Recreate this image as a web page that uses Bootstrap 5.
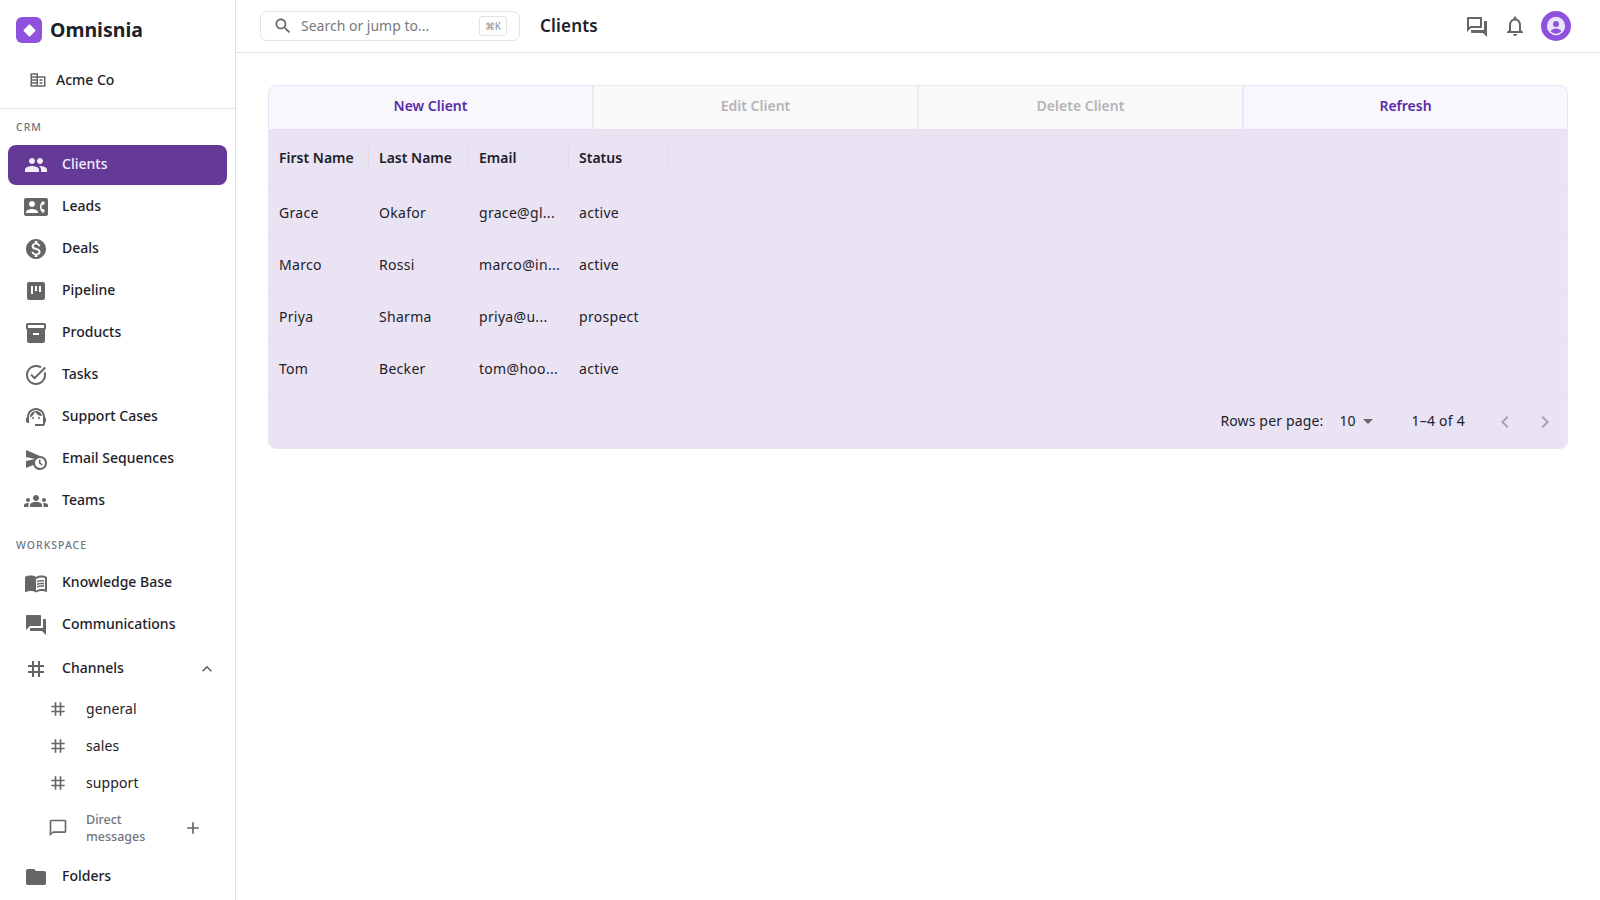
<!DOCTYPE html>
<html lang="en">
<head>
  <meta charset="UTF-8">
  <meta name="viewport" content="width=device-width, initial-scale=1.0">
  <title>Omnisnia - Clients</title>

  <!-- Bootstrap CSS -->
  <link href="https://cdn.jsdelivr.net/npm/bootstrap@5.3.3/dist/css/bootstrap.min.css" rel="stylesheet">

  <style>
    body { font-family: "Noto Sans", "Liberation Sans", sans-serif; font-size: 14px; color: #1d2129; background: #fff; height: 900px; overflow: hidden; }
    .ico { width: 24px; height: 24px; fill: #666; flex: none; }
    .ico-sm { width: 20px; height: 20px; }

    /* sidebar */
    .side { width: 236px; height: 900px; border-right: 1px solid #e2e2e6; flex: none; overflow: hidden; }
    .brand-row { height: 60px; padding-left: 16px; gap: 8px; }
    .brand-logo { width: 26px; height: 26px; border-radius: 6px; background: #8e52dc; }
    .brand-logo i { display: block; width: 9px; height: 9px; background: #fff; transform: rotate(45deg); border-radius: 1px; }
    .brand-name { font-size: 19.5px; font-weight: 700; line-height: 1; }
    .org-row { height: 49px; padding: 0 0 10px 29px; gap: 9px; font-weight: 500; border-bottom: 1px solid #e2e2e6; }
    .org-row .ico { width: 18px; height: 18px; margin-top: 1px; }
    .side-label { font-size: 10.5px; letter-spacing: 1px; color: #6f7480; font-weight: 500; line-height: 14px; padding: 11px 0 11px 16px; }
    .side-label.second { padding: 15px 0 11px 16px; }
    .side .nav-link { height: 40px; margin: 0 8px 2px; padding: 0 0 3px 16px; gap: 14px; display: flex; align-items: center; border-radius: 8px; color: #1d2129; font-weight: 500; }
    .side .nav-link .ico { margin-top: 3px; }
    .side .nav-link.active { background: #643a96; color: #f3ecfb; }
    .side .nav-link.active .ico { fill: #f3ecfb; }
    .side .channels-link { margin-top: 2px; }
    .side .sub-link { height: 37px; margin: 0 8px; padding-left: 40px; gap: 18px; font-weight: 400; letter-spacing: .1px; }
    .side .sub-link .ico { width: 20px; height: 20px; margin-top: 2px; }
    .dm-link { height: 52px; margin: 0 8px 3px; padding-left: 40px; gap: 18px; font-size: 12.5px; color: #6f7480; line-height: 17px; font-weight: 500; }
    .channels-chevron { margin-right: 10px; }
    .dm-add { margin-right: 24px; }

    /* header */
    .topbar { height: 53px; border-bottom: 1px solid #e2e2e6; padding: 0 29px 0 24px; }
    .search-box { width: 260px; height: 30px; border: 1px solid #e2e2e6; border-radius: 7px; padding: 0 12px; gap: 8px; color: #77797f; }
    .search-text { padding-bottom: 2px; }
    .kbd-hint { font-size: 10px; color: #8b8d93; border: 1px solid #e2e2e6; border-radius: 3px; padding: 0 5px; height: 20px; line-height: 18px; }
    .page-title { font-size: 17px; font-weight: 600; margin-left: 20px; letter-spacing: .2px; }
    .top-actions { gap: 14px; }
    .top-actions .ico:first-child { margin-top: 2px; }
    .avatar-dot { width: 30px; height: 30px; border-radius: 50%; background: #8e52dc; }

    /* client grid */
    .grid-wrap { margin: 32px 32px 0; border-radius: 8px; overflow: hidden; background: #eae3f3; border: 1px solid #e9e6f3; }
    .tool-row { height: 45px; border-bottom: 2px solid #e6e2f1; }
    .tool-row .btn { flex: 1; border: 0; border-radius: 0; border-right: 2px solid #ebe9f3; background: #f8f7fe; color: #5a2ca8; font-size: 14px; font-weight: 600; padding-bottom: 10px; }
    .tool-row .btn:last-child { border-right: 0; }
    .tool-row .btn:disabled { background: #f9f9f9; color: #b4b4b8; opacity: 1; }
    .client-table { table-layout: fixed; margin: 0; --bs-table-bg: transparent; --bs-table-color: #1d2129; --bs-table-border-color: #e4deee; }
    .client-table th, .client-table td { width: 100px; padding: 0 10px 2px; vertical-align: middle; white-space: nowrap; font-size: 14px; }
    .client-table .fill-col { width: auto; }
    .client-table thead tr { height: 56px; }
    .client-table tbody tr { height: 52px; }
    .client-table th { font-weight: 600; position: relative; }
    .client-table th:not(.fill-col)::after { content: ""; position: absolute; right: 0; top: 16px; height: 24px; width: 1px; background: #e0d9ea; }
    .client-table td { font-weight: 400; letter-spacing: .3px; }
    .pager { height: 52px; padding: 0 10px 3px 0; color: #1d2129; }
    .pager .ico { fill: #a5a3ab; margin-top: 3px; }
    .rows-label { letter-spacing: .15px; }
    .page-range { letter-spacing: .25px; margin-right: 28px; }
    .caret-down { width: 0; height: 0; border-left: 5px solid transparent; border-right: 5px solid transparent; border-top: 5px solid #666; margin: 3px 38px 0 8px; }
  </style>
</head>
<body>

<svg class="d-none">
  <symbol id="i-people" viewBox="0 0 24 24"><path d="M16 11c1.66 0 2.99-1.34 2.99-3S17.66 5 16 5c-1.66 0-3 1.34-3 3s1.34 3 3 3zm-8 0c1.66 0 2.99-1.34 2.99-3S9.66 5 8 5C6.34 5 5 6.34 5 8s1.34 3 3 3zm0 2c-2.33 0-7 1.17-7 3.5V19h14v-2.5c0-2.33-4.67-3.5-7-3.5zm8 0c-.29 0-.62.02-.97.05 1.16.84 1.97 1.97 1.97 3.45V19h6v-2.5c0-2.33-4.67-3.5-7-3.5z"/></symbol>
  <symbol id="i-leads" viewBox="0 0 24 24"><path d="M22 3H2C.9 3 0 3.9 0 5v14c0 1.1.9 2 2 2h20c1.1 0 1.99-.9 1.99-2L24 5c0-1.1-.9-2-2-2zM8 6c1.66 0 3 1.34 3 3s-1.34 3-3 3-3-1.34-3-3 1.34-3 3-3zm6 12H2v-1c0-2 4-3.1 6-3.1s6 1.1 6 3.1v1zm3.85-4h1.64L21 16l-1.99 1.99c-1.31-.98-2.28-2.38-2.73-3.99-.18-.64-.28-1.31-.28-2s.1-1.36.28-2c.45-1.62 1.42-3.01 2.73-3.99L21 8l-1.51 2h-1.64c-.22.63-.35 1.3-.35 2s.13 1.37.35 2z"/></symbol>
  <symbol id="i-deals" viewBox="0 0 24 24"><path d="M12 2C6.48 2 2 6.48 2 12s4.48 10 10 10 10-4.48 10-10S17.52 2 12 2zm1.41 16.09V20h-2.67v-1.93c-1.71-.36-3.16-1.46-3.27-3.4h1.96c.1 1.05.82 1.87 2.65 1.87 1.96 0 2.4-.98 2.4-1.59 0-.83-.44-1.61-2.67-2.14-2.48-.6-4.18-1.62-4.18-3.67 0-1.72 1.39-2.84 3.11-3.21V4h2.67v1.95c1.86.45 2.79 1.86 2.85 3.39H14.3c-.05-1.11-.64-1.87-2.22-1.87-1.5 0-2.4.68-2.4 1.64 0 .84.65 1.39 2.67 1.91s4.18 1.39 4.18 3.91c-.01 1.83-1.38 2.83-3.12 3.16z"/></symbol>
  <symbol id="i-pipeline" viewBox="0 0 24 24"><path d="M19 3H5c-1.1 0-2 .9-2 2v14c0 1.1.9 2 2 2h14c1.1 0 2-.9 2-2V5c0-1.1-.9-2-2-2zM9 15H7V7h2v8zm4-3h-2V7h2v5zm4 1h-2V7h2v6z"/></symbol>
  <symbol id="i-products" viewBox="0 0 24 24"><path d="M20 2H4c-1 0-2 .9-2 2v3.01c0 .72.43 1.34 1 1.69V20c0 1.1 1.1 2 2 2h14c.9 0 2-.9 2-2V8.7c.57-.35 1-.97 1-1.69V4c0-1.1-1-2-2-2zm-5 12H9v-2h6v2zm5-7H4V4l16-.02V7z"/></symbol>
  <symbol id="i-tasks" viewBox="0 0 24 24"><path d="M22 5.18 10.59 16.6l-4.24-4.24 1.41-1.41 2.83 2.83 10-10L22 5.18zm-2.21 5.04c.13.57.21 1.17.21 1.78 0 4.42-3.58 8-8 8s-8-3.58-8-8 3.58-8 8-8c1.58 0 3.04.46 4.28 1.25l1.44-1.44C16.1 2.67 14.13 2 12 2 6.48 2 2 6.48 2 12s4.48 10 10 10 10-4.48 10-10c0-1.19-.22-2.33-.6-3.39l-1.61 1.61z"/></symbol>
  <symbol id="i-support" viewBox="0 0 24 24"><path d="M21 12.22C21 6.73 16.74 3 12 3c-4.69 0-9 3.65-9 9.28-.6.34-1 .98-1 1.72v2c0 1.1.9 2 2 2h1v-6.1c0-3.87 3.13-7 7-7s7 3.13 7 7V19h-8v2h8c1.1 0 2-.9 2-2v-1.22c.59-.31 1-.92 1-1.64v-2.3c0-.7-.41-1.31-1-1.62z"/><circle cx="9" cy="13" r="1"/><circle cx="15" cy="13" r="1"/><path d="M18 11.03C17.52 8.18 15.04 6 12.05 6c-3.03 0-6.29 2.51-6.03 6.45 2.47-1.01 4.33-3.21 4.86-5.89 1.31 2.63 4 4.44 7.12 4.47z"/></symbol>
  <symbol id="i-sequence" viewBox="0 0 24 24"><path d="M16.5 12.5H15v4l3 2 .75-1.23-2.25-1.52V12.5zM16 9 2 3v7l9 2-9 2v7l7.27-3.11C10.09 20.83 12.79 23 16 23c3.86 0 7-3.14 7-7s-3.14-7-7-7zm0 12c-2.75 0-4.98-2.22-5-4.97v-.07C11.02 13.22 13.25 11 16 11c2.76 0 5 2.24 5 5s-2.24 5-5 5z"/></symbol>
  <symbol id="i-teams" viewBox="0 0 24 24"><path d="M4 13c1.1 0 2-.9 2-2s-.9-2-2-2-2 .9-2 2 .9 2 2 2zm1.13 1.1c-.37-.06-.74-.1-1.13-.1-.99 0-1.93.21-2.78.58C.48 14.9 0 15.62 0 16.43V18h4.5v-1.61c0-.83.23-1.61.63-2.29zM20 13c1.1 0 2-.9 2-2s-.9-2-2-2-2 .9-2 2 .9 2 2 2zm4 3.43c0-.81-.48-1.53-1.22-1.85-.85-.37-1.79-.58-2.78-.58-.39 0-.76.04-1.13.1.4.68.63 1.46.63 2.29V18H24v-1.57zm-7.76-2.78c-1.17-.52-2.61-.9-4.24-.9-1.63 0-3.07.39-4.24.9C6.68 14.13 6 15.21 6 16.39V18h12v-1.61c0-1.18-.68-2.26-1.76-2.74zM12 12c1.66 0 3-1.34 3-3s-1.34-3-3-3-3 1.34-3 3 1.34 3 3 3z"/></symbol>
  <symbol id="i-book" viewBox="0 0 24 24"><path d="M21 5c-1.11-.35-2.33-.5-3.5-.5-1.95 0-4.05.4-5.5 1.5-1.45-1.1-3.55-1.5-5.5-1.5S2.45 4.9 1 6v14.65c0 .25.25.5.5.5.1 0 .15-.05.25-.05C3.1 20.45 5.05 20 6.5 20c1.95 0 4.05.4 5.5 1.5 1.35-.85 3.8-1.5 5.5-1.5 1.65 0 3.35.3 4.75 1.05.1.05.15.05.25.05.25 0 .5-.25.5-.5V6c-.6-.45-1.25-.75-2-1zm0 13.5c-1.1-.35-2.3-.5-3.5-.5-1.7 0-4.15.65-5.5 1.5V8c1.35-.85 3.8-1.5 5.5-1.5 1.2 0 2.4.15 3.5.5v11.5z"/><path d="M17.5 10.5c.88 0 1.73.09 2.5.26V9.24c-.79-.15-1.64-.24-2.5-.24-1.7 0-3.24.29-4.5.83v1.66c1.13-.64 2.7-.99 4.5-.99zM13 12.49v1.66c1.13-.64 2.7-.99 4.5-.99.88 0 1.73.09 2.5.26V11.9c-.79-.15-1.64-.24-2.5-.24-1.7 0-3.24.3-4.5.83zM17.5 14.33c-1.7 0-3.24.29-4.5.83v1.66c1.13-.64 2.7-.99 4.5-.99.88 0 1.73.09 2.5.26v-1.52c-.79-.16-1.64-.24-2.5-.24z"/></symbol>
  <symbol id="i-forum" viewBox="0 0 24 24"><path d="M21 6h-2v9H6v2c0 .55.45 1 1 1h11l4 4V7c0-.55-.45-1-1-1zm-4 6V3c0-.55-.45-1-1-1H3c-.55 0-1 .45-1 1v14l4-4h10c.55 0 1-.45 1-1z"/></symbol>
  <symbol id="i-tag" viewBox="0 0 24 24"><path d="M20 10V8h-4V4h-2v4h-4V4H8v4H4v2h4v4H4v2h4v4h2v-4h4v4h2v-4h4v-2h-4v-4h4zm-6 4h-4v-4h4v4z"/></symbol>
  <symbol id="i-chat" viewBox="0 0 24 24"><path d="M20 2H4c-1.1 0-2 .9-2 2v18l4-4h14c1.1 0 2-.9 2-2V4c0-1.1-.9-2-2-2zm0 14H6l-2 2V4h16v12z"/></symbol>
  <symbol id="i-add" viewBox="0 0 24 24"><path d="M19 13h-6v6h-2v-6H5v-2h6V5h2v6h6v2z"/></symbol>
  <symbol id="i-less" viewBox="0 0 24 24"><path d="M12 8l-6 6 1.41 1.41L12 10.83l4.59 4.58L18 14z"/></symbol>
  <symbol id="i-folder" viewBox="0 0 24 24"><path d="M10 4H4c-1.1 0-1.99.9-1.99 2L2 18c0 1.1.9 2 2 2h16c1.1 0 2-.9 2-2V8c0-1.1-.9-2-2-2h-8l-2-2z"/></symbol>
  <symbol id="i-org" viewBox="0 0 24 24"><path d="M12 7V3H2v18h20V7H12zM10 19H4v-2h6v2zm0-4H4v-2h6v2zm0-4H4V9h6v2zm0-4H4V5h6v2zm10 12h-8V9h8v10zm-2-8h-4v2h4v-2zm0 4h-4v2h4v-2z"/></symbol>
  <symbol id="i-search" viewBox="0 0 24 24"><path d="M15.5 14h-.79l-.28-.27C15.41 12.59 16 11.11 16 9.5 16 5.91 13.09 3 9.5 3S3 5.91 3 9.5 5.91 16 9.5 16c1.61 0 3.09-.59 4.23-1.57l.27.28v.79l5 4.99L20.49 19l-4.99-5zm-6 0C7.01 14 5 11.99 5 9.5S7.01 5 9.5 5 14 7.01 14 9.5 11.99 14 9.5 14z"/></symbol>
  <symbol id="i-forum-o" viewBox="0 0 24 24"><path d="M15 4v7H5.17L4 12.17V4h11m1-2H3c-.55 0-1 .45-1 1v14l4-4h10c.55 0 1-.45 1-1V3c0-.55-.45-1-1-1zm5 4h-2v9H6v2c0 .55.45 1 1 1h11l4 4V7c0-.55-.45-1-1-1z"/></symbol>
  <symbol id="i-bell" viewBox="0 0 24 24"><path d="M12 22c1.1 0 2-.9 2-2h-4c0 1.1.9 2 2 2zm6-6v-5c0-3.07-1.63-5.64-4.5-6.32V4c0-.83-.67-1.5-1.5-1.5s-1.5.67-1.5 1.5v.68C7.64 5.36 6 7.92 6 11v5l-2 2v1h16v-1l-2-2zm-2 1H8v-6c0-2.48 1.51-4.5 4-4.5s4 2.02 4 4.5v6z"/></symbol>
  <symbol id="i-prev" viewBox="0 0 24 24"><path d="M15.41 7.41 14 6l-6 6 6 6 1.41-1.41L10.83 12z"/></symbol>
  <symbol id="i-next" viewBox="0 0 24 24"><path d="M10 6 8.59 7.41 13.17 12l-4.58 4.59L10 18l6-6z"/></symbol>
</svg>

<div class="d-flex">
  <!-- sidebar -->
  <aside class="side">
    <div class="brand-row d-flex align-items-center">
      <span class="brand-logo d-flex align-items-center justify-content-center"><i></i></span>
      <span class="brand-name">Omnisnia</span>
    </div>
    <div class="org-row d-flex align-items-center">
      <svg class="ico"><use href="#i-org"/></svg>
      <span>Acme Co</span>
    </div>

    <div class="side-label">CRM</div>
    <nav class="nav flex-column">
      <a class="nav-link active" href="#"><svg class="ico"><use href="#i-people"/></svg>Clients</a>
      <a class="nav-link" href="#"><svg class="ico"><use href="#i-leads"/></svg>Leads</a>
      <a class="nav-link" href="#"><svg class="ico"><use href="#i-deals"/></svg>Deals</a>
      <a class="nav-link" href="#"><svg class="ico"><use href="#i-pipeline"/></svg>Pipeline</a>
      <a class="nav-link" href="#"><svg class="ico"><use href="#i-products"/></svg>Products</a>
      <a class="nav-link" href="#"><svg class="ico"><use href="#i-tasks"/></svg>Tasks</a>
      <a class="nav-link" href="#"><svg class="ico"><use href="#i-support"/></svg>Support Cases</a>
      <a class="nav-link" href="#"><svg class="ico"><use href="#i-sequence"/></svg>Email Sequences</a>
      <a class="nav-link" href="#"><svg class="ico"><use href="#i-teams"/></svg>Teams</a>
    </nav>

    <div class="side-label second">WORKSPACE</div>
    <nav class="nav flex-column">
      <a class="nav-link" href="#"><svg class="ico"><use href="#i-book"/></svg>Knowledge Base</a>
      <a class="nav-link" href="#"><svg class="ico"><use href="#i-forum"/></svg>Communications</a>
      <a class="nav-link channels-link" href="#"><svg class="ico"><use href="#i-tag"/></svg>Channels<svg class="ico ico-sm ms-auto channels-chevron"><use href="#i-less"/></svg></a>
      <a class="nav-link sub-link" href="#"><svg class="ico"><use href="#i-tag"/></svg>general</a>
      <a class="nav-link sub-link" href="#"><svg class="ico"><use href="#i-tag"/></svg>sales</a>
      <a class="nav-link sub-link" href="#"><svg class="ico"><use href="#i-tag"/></svg>support</a>
      <div class="dm-link d-flex align-items-center">
        <svg class="ico ico-sm"><use href="#i-chat"/></svg>
        <span>Direct<br>messages</span>
        <svg class="ico ico-sm ms-auto dm-add"><use href="#i-add"/></svg>
      </div>
      <a class="nav-link" href="#"><svg class="ico"><use href="#i-folder"/></svg>Folders</a>
    </nav>
  </aside>

  <!-- main -->
  <div class="flex-grow-1">
    <header class="topbar d-flex align-items-center">
      <div class="search-box d-flex align-items-center">
        <svg class="ico ico-sm"><use href="#i-search"/></svg>
        <span class="search-text">Search or jump to...</span>
        <span class="kbd-hint ms-auto">⌘K</span>
      </div>
      <div class="page-title">Clients</div>
      <div class="top-actions d-flex align-items-center ms-auto">
        <svg class="ico"><use href="#i-forum-o"/></svg>
        <svg class="ico"><use href="#i-bell"/></svg>
        <span class="avatar-dot d-flex align-items-center justify-content-center">
          <svg width="20" height="20" viewBox="0 0 24 24"><circle cx="12" cy="12" r="11" fill="#ece2fa"/><circle cx="12" cy="9.5" r="3.6" fill="#8e52dc"/><path d="M5.5 18.2C7.2 16 9.5 15 12 15s4.8 1 6.5 3.2C16.8 20 14.5 21 12 21s-4.8-1-6.5-2.8z" fill="#8e52dc"/></svg>
        </span>
      </div>
    </header>

    <div class="grid-wrap">
      <div class="tool-row d-flex">
        <button class="btn" type="button">New Client</button>
        <button class="btn" type="button" disabled>Edit Client</button>
        <button class="btn" type="button" disabled>Delete Client</button>
        <button class="btn" type="button">Refresh</button>
      </div>
      <table class="table client-table">
        <thead>
          <tr><th>First Name</th><th>Last Name</th><th>Email</th><th>Status</th><th class="fill-col"></th></tr>
        </thead>
        <tbody>
          <tr><td>Grace</td><td>Okafor</td><td>grace@gl...</td><td>active</td><td class="fill-col"></td></tr>
          <tr><td>Marco</td><td>Rossi</td><td>marco@in...</td><td>active</td><td class="fill-col"></td></tr>
          <tr><td>Priya</td><td>Sharma</td><td>priya@u...</td><td>prospect</td><td class="fill-col"></td></tr>
          <tr><td>Tom</td><td>Becker</td><td>tom@hoo...</td><td>active</td><td class="fill-col"></td></tr>
        </tbody>
      </table>
      <div class="pager d-flex align-items-center justify-content-end">
        <span class="rows-label me-3">Rows per page:</span>
        <span>10</span><span class="caret-down"></span>
        <span class="page-range">1–4 of 4</span>
        <svg class="ico"><use href="#i-prev"/></svg>
        <svg class="ico ms-3"><use href="#i-next"/></svg>
      </div>
    </div>
  </div>
</div>

<!-- Bootstrap JS -->
<script src="https://cdn.jsdelivr.net/npm/bootstrap@5.3.3/dist/js/bootstrap.bundle.min.js"></script>
</body>
</html>
